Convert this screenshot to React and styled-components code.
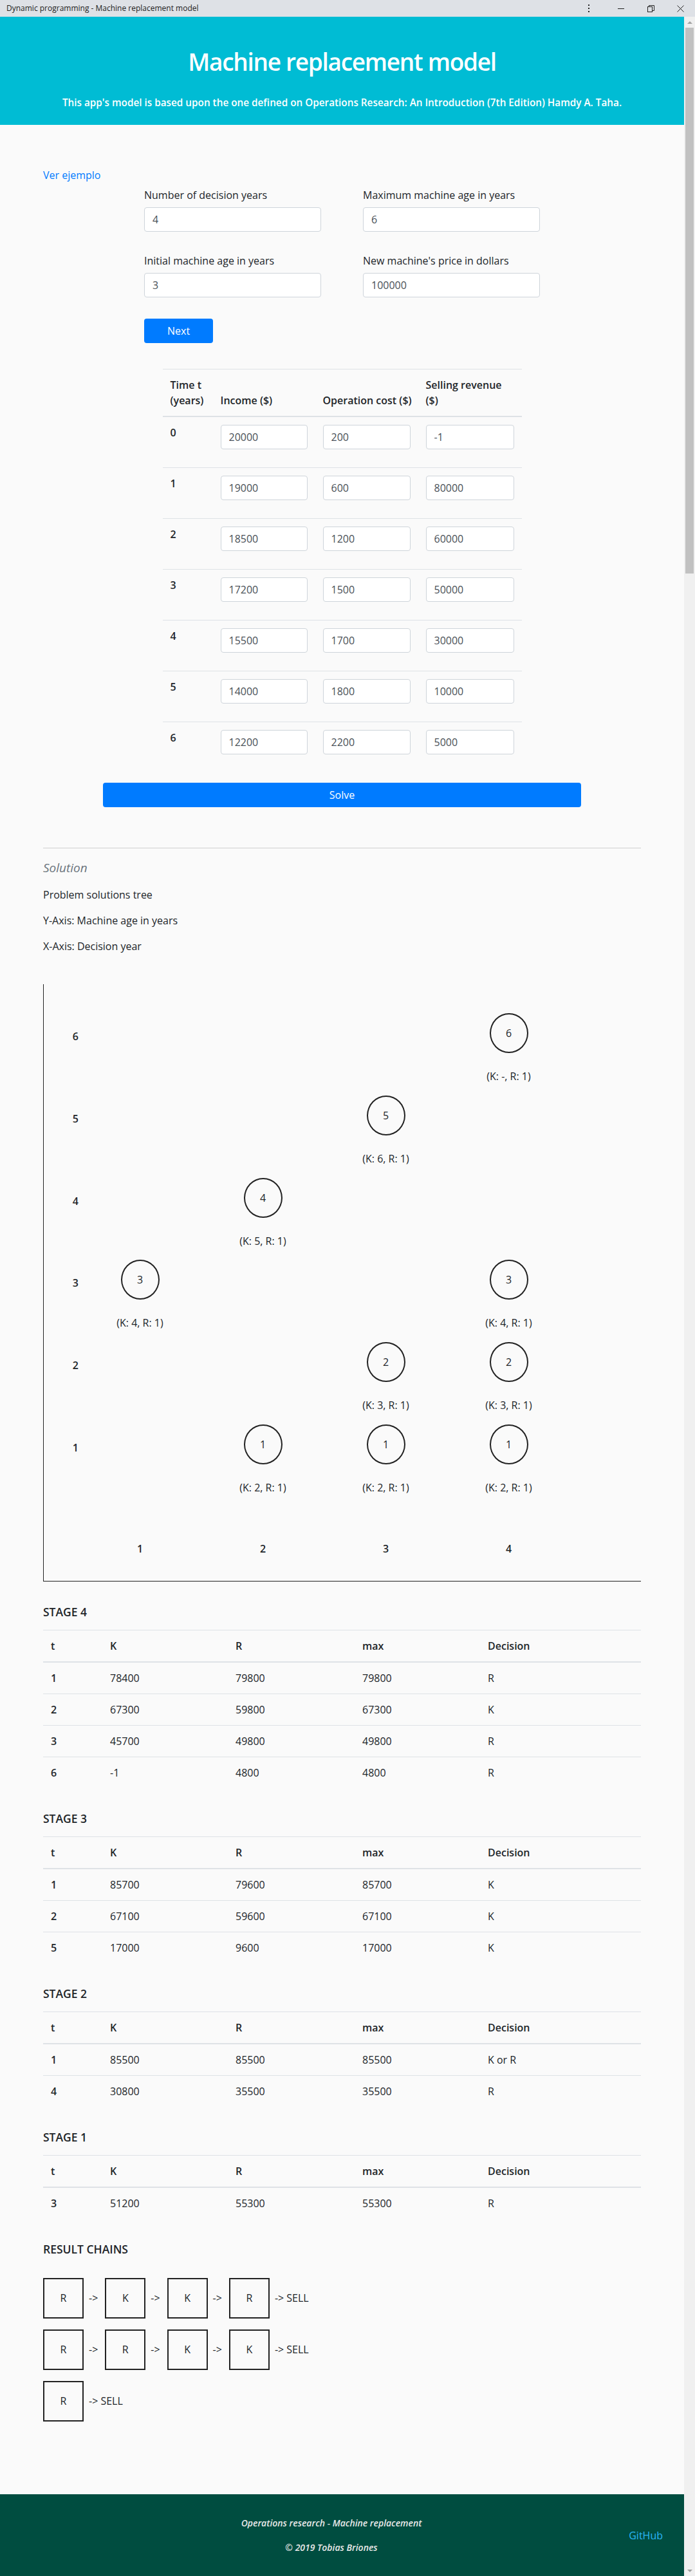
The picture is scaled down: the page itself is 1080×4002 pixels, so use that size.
import React from 'react';
import styled, {createGlobalStyle} from 'styled-components';

const GlobalStyle = createGlobalStyle`
  * {
    box-sizing: border-box;
  }
  html,
  body {
    margin: 0;
    padding: 0;
    height: 100%;
    overflow: hidden;
  }
  body {
    font-family: 'Open Sans', 'Liberation Sans', sans-serif;
    font-size: 16px;
    line-height: 1.5;
    color: #212529;
    background: #fafafa;
  }
`;

const StyledWindow = styled.div`
  height: 100vh;
  display: flex;
  flex-direction: column;
`;

const StyledTitleBar = styled.div`
  height: 26px;
  flex-shrink: 0;
  display: flex;
  align-items: center;
  padding-left: 10px;
  background: #dee1e6;
  font-size: 12px;
  color: #222;
`;

const StyledControls = styled.div`
  margin-left: auto;
  display: flex;
  height: 100%;
`;

const StyledControl = styled.div`
  width: 46px;
  height: 100%;
  display: flex;
  align-items: center;
  justify-content: center;
  margin-right: ${({gap}) => gap || 0}px;
`;

const StyledViewport = styled.div`
  flex: 1;
  min-height: 0;
  display: flex;
`;

const StyledPage = styled.div`
  flex: 1;
  min-width: 0;
  display: flex;
  flex-direction: column;
  overflow: hidden;
`;

const StyledScrollbar = styled.div`
  width: 17px;
  flex-shrink: 0;
  display: flex;
  flex-direction: column;
  background: #f0f0f0;
`;

const StyledScrollArrow = styled.div`
  height: 17px;
  display: flex;
  align-items: center;
  justify-content: center;
  margin-top: ${({down}) => (down ? 'auto' : 0)};
  &::after {
    content: '';
    border-left: 4px solid transparent;
    border-right: 4px solid transparent;
    ${({down}) => (down ? 'border-top: 4px solid #a3a3a3;' : 'border-bottom: 4px solid #a3a3a3;')}
  }
`;

const StyledThumb = styled.div`
  height: 848px;
  margin: 0 2px;
  background: #c1c1c1;
`;

const StyledHeader = styled.header`
  height: 168px;
  flex-shrink: 0;
  background: #00bcd4;
  color: #fff;
  text-align: center;
  padding-top: 47px;
`;

const StyledTitle = styled.h1`
  margin: 0;
  font-size: 37px;
  line-height: 46px;
  font-weight: 600;
  letter-spacing: -1.3px;
`;

const StyledSubtitle = styled.p`
  margin: 28px 0 0;
  font-size: 15.3px;
  line-height: 24px;
  font-weight: 600;
`;

const StyledMain = styled.main`
  padding: 66px 67px 0;
`;

const StyledLink = styled.a`
  color: #007bff;
  text-decoration: none;
  display: inline-block;
`;

const StyledForm = styled.form`
  width: 615px;
  margin: 7px auto 0;
  display: grid;
  grid-template-columns: 275px 275px;
  column-gap: 65px;
  row-gap: 33px;
`;

const StyledLabel = styled.label`
  display: block;
  margin-bottom: 7px;
`;

const StyledInput = styled.input`
  display: block;
  width: 100%;
  height: 38px;
  padding: 6px 12px;
  font-family: inherit;
  font-size: 16px;
  color: #495057;
  background: #fff;
  border: 1px solid #ced4da;
  border-radius: 4px;
  margin-bottom: ${({spaced}) => (spaced ? '16px' : '0')};
`;

const StyledButton = styled.button`
  display: block;
  height: 38px;
  padding: 0 36px;
  font-family: inherit;
  font-size: 16px;
  color: #fff;
  background: #007bff;
  border: none;
  border-radius: 4px;
  width: ${({wide}) => (wide ? '80%' : 'auto')};
  margin: ${({wide}) => (wide ? '0 auto' : '33px 0 0')};
`;

const StyledNextRow = styled.div`
  width: 615px;
  margin: 0 auto;
`;

const StyledTable = styled.table`
  width: ${({narrow}) => (narrow ? '558px' : '100%')};
  margin: ${({narrow}) => (narrow ? '40px auto 16px' : '0 0 35px')};
  border-collapse: collapse;
  table-layout: fixed;
`;

const StyledTh = styled.th`
  padding: 12px;
  text-align: left;
  vertical-align: bottom;
  font-weight: 600;
  white-space: nowrap;
  border-top: 1px solid #dee2e6;
  border-bottom: 2px solid #dee2e6;
`;

const StyledTd = styled.td`
  padding: 12px;
  vertical-align: top;
  border-top: 1px solid #dee2e6;
  font-weight: ${({head}) => (head ? 600 : 400)};
`;

const StyledHr = styled.hr`
  margin: 63px 0 18px;
  border: none;
  border-top: 1px solid #cfcfcf;
`;

const StyledSolution = styled.h5`
  margin: 0 0 18px;
  font-size: 19px;
  line-height: 24px;
  font-style: italic;
  font-weight: 400;
  color: #6c757d;
`;

const StyledText = styled.p`
  margin: 0 0 16px;
`;

const StyledGraph = styled.div`
  margin: 47px 0 35px;
  padding: 45px 0 38px;
  border-left: 1px solid #222;
  border-bottom: 1px solid #222;
  display: grid;
  grid-template-columns: 54px repeat(4, 191px);
  grid-template-rows: repeat(6, 127.8px) 77px;
`;

const StyledAxisLabel = styled.div`
  font-weight: 600;
  line-height: 24px;
  justify-self: ${({x}) => (x ? 'center' : 'end')};
  align-self: ${({x}) => (x ? 'end' : 'start')};
  margin-top: ${({x}) => (x ? 0 : 24)}px;
`;

const StyledNode = styled.div`
  display: flex;
  flex-direction: column;
  align-items: center;
`;

const StyledCircle = styled.div`
  width: 60px;
  height: 62px;
  border: 2px solid #222;
  border-radius: 50%;
  display: flex;
  align-items: center;
  justify-content: center;
`;

const StyledNodeInfo = styled.div`
  margin-top: 24px;
  line-height: 24px;
`;

const StyledHeading = styled.h6`
  margin: 0 0 16px;
  font-size: 17.5px;
  line-height: 24px;
  font-weight: 600;
  text-transform: uppercase;
`;

const StyledChains = styled.div`
  padding-top: 17px;
  display: flex;
  flex-direction: column;
  gap: 17px;
`;

const StyledChain = styled.div`
  display: flex;
  align-items: center;
`;

const StyledChainBox = styled.div`
  width: 63px;
  height: 63px;
  border: 2px solid #222;
  display: flex;
  align-items: center;
  justify-content: center;
`;

const StyledArrow = styled.span`
  padding: 0 11px 0 8px;
`;

const StyledFooter = styled.footer`
  margin-top: auto;
  height: 127px;
  flex-shrink: 0;
  background: #004d40;
  display: grid;
  grid-template-columns: 1fr auto 1fr;
  align-items: center;
  padding-right: 33px;
`;

const StyledFooterText = styled.div`
  grid-column: 2;
  text-align: center;
  font-size: 14px;
  line-height: 21px;
  font-style: italic;
  font-weight: 600;
  color: #e8e8e8;
  & p {
    margin: 0;
  }
  & p + p {
    margin-top: 17px;
  }
`;

const StyledGitHub = styled.a`
  justify-self: end;
  color: #29b6f6;
  text-decoration: none;
  padding-left: 33px;
`;

const inputRows = [
  [20000, 200, -1],
  [19000, 600, 80000],
  [18500, 1200, 60000],
  [17200, 1500, 50000],
  [15500, 1700, 30000],
  [14000, 1800, 10000],
  [12200, 2200, 5000],
];

const graphRows = [
  {age: 6, nodes: {4: '(K: -, R: 1)'}},
  {age: 5, nodes: {3: '(K: 6, R: 1)'}},
  {age: 4, nodes: {2: '(K: 5, R: 1)'}},
  {age: 3, nodes: {1: '(K: 4, R: 1)', 4: '(K: 4, R: 1)'}},
  {age: 2, nodes: {3: '(K: 3, R: 1)', 4: '(K: 3, R: 1)'}},
  {age: 1, nodes: {2: '(K: 2, R: 1)', 3: '(K: 2, R: 1)', 4: '(K: 2, R: 1)'}},
];

const stages = [
  {
    name: 'Stage 4',
    rows: [
      [1, 78400, 79800, 79800, 'R'],
      [2, 67300, 59800, 67300, 'K'],
      [3, 45700, 49800, 49800, 'R'],
      [6, -1, 4800, 4800, 'R'],
    ],
  },
  {
    name: 'Stage 3',
    rows: [
      [1, 85700, 79600, 85700, 'K'],
      [2, 67100, 59600, 67100, 'K'],
      [5, 17000, 9600, 17000, 'K'],
    ],
  },
  {
    name: 'Stage 2',
    rows: [
      [1, 85500, 85500, 85500, 'K or R'],
      [4, 30800, 35500, 35500, 'R'],
    ],
  },
  {
    name: 'Stage 1',
    rows: [[3, 51200, 55300, 55300, 'R']],
  },
];

const chains = [['R', 'K', 'K', 'R'], ['R', 'R', 'K', 'K'], ['R']];

const TitleBar = () => (
  <StyledTitleBar>
    Dynamic programming - Machine replacement model
    <StyledControls>
      <StyledControl gap={4}>
        <svg width="4" height="14" viewBox="0 0 4 14">
          <rect x="1" y="1" width="2" height="2" fill="#222" />
          <rect x="1" y="6" width="2" height="2" fill="#222" />
          <rect x="1" y="11" width="2" height="2" fill="#222" />
        </svg>
      </StyledControl>
      <StyledControl>
        <svg width="10" height="10" viewBox="0 0 10 10">
          <line x1="0" y1="5.5" x2="10" y2="5.5" stroke="#222" />
        </svg>
      </StyledControl>
      <StyledControl>
        <svg width="11" height="11" viewBox="0 0 11 11" fill="none" stroke="#222">
          <rect x="0.5" y="2.5" width="7" height="8" />
          <path d="M2.5 2.5V0.5H10.5V8.5H7.5" />
        </svg>
      </StyledControl>
      <StyledControl>
        <svg width="11" height="11" viewBox="0 0 11 11" stroke="#222">
          <line x1="0.5" y1="0.5" x2="10.5" y2="10.5" />
          <line x1="10.5" y1="0.5" x2="0.5" y2="10.5" />
        </svg>
      </StyledControl>
    </StyledControls>
  </StyledTitleBar>
);

const Field = ({label, value}) => (
  <div>
    <StyledLabel>{label}</StyledLabel>
    <StyledInput defaultValue={value} />
  </div>
);

const StageTable = ({rows}) => (
  <StyledTable>
    <colgroup>
      <col style={{width: 92}} />
      <col style={{width: 195}} />
      <col style={{width: 197}} />
      <col style={{width: 195}} />
      <col />
    </colgroup>
    <thead>
      <tr>
        <StyledTh>t</StyledTh>
        <StyledTh>K</StyledTh>
        <StyledTh>R</StyledTh>
        <StyledTh>max</StyledTh>
        <StyledTh>Decision</StyledTh>
      </tr>
    </thead>
    <tbody>
      {rows.map((row) => (
        <tr key={row[0]}>
          {row.map((cell, i) => (
            <StyledTd key={i} head={i === 0}>
              {cell}
            </StyledTd>
          ))}
        </tr>
      ))}
    </tbody>
  </StyledTable>
);

const SolutionTree = () => (
  <StyledGraph>
    {graphRows.map(({age, nodes}) => (
      <React.Fragment key={age}>
        <StyledAxisLabel>{age}</StyledAxisLabel>
        {[1, 2, 3, 4].map((year) => (
          <StyledNode key={year}>
            {nodes[year] && (
              <>
                <StyledCircle>{age}</StyledCircle>
                <StyledNodeInfo>{nodes[year]}</StyledNodeInfo>
              </>
            )}
          </StyledNode>
        ))}
      </React.Fragment>
    ))}
    <div />
    {[1, 2, 3, 4].map((year) => (
      <StyledAxisLabel key={year} x>
        {year}
      </StyledAxisLabel>
    ))}
  </StyledGraph>
);

const App = () => (
  <StyledWindow>
    <GlobalStyle />
    <TitleBar />
    <StyledViewport>
      <StyledPage>
        <StyledHeader>
          <StyledTitle>Machine replacement model</StyledTitle>
          <StyledSubtitle>
            This app's model is based upon the one defined on Operations Research: An Introduction (7th Edition)
            Hamdy A. Taha.
          </StyledSubtitle>
        </StyledHeader>

        <StyledMain>
          <StyledLink href="#">Ver ejemplo</StyledLink>
          <StyledForm>
            <Field label="Number of decision years" value="4" />
            <Field label="Maximum machine age in years" value="6" />
            <Field label="Initial machine age in years" value="3" />
            <Field label="New machine's price in dollars" value="100000" />
          </StyledForm>
          <StyledNextRow>
            <StyledButton type="button">Next</StyledButton>
          </StyledNextRow>

          <StyledTable narrow>
            <colgroup>
              <col style={{width: 78}} />
              <col style={{width: 159}} />
              <col style={{width: 160}} />
              <col style={{width: 161}} />
            </colgroup>
            <thead>
              <tr>
                <StyledTh>
                  Time t<br />
                  (years)
                </StyledTh>
                <StyledTh>Income ($)</StyledTh>
                <StyledTh>Operation cost ($)</StyledTh>
                <StyledTh>
                  Selling revenue
                  <br />
                  ($)
                </StyledTh>
              </tr>
            </thead>
            <tbody>
              {inputRows.map((row, t) => (
                <tr key={t}>
                  <StyledTd head>{t}</StyledTd>
                  {row.map((value, i) => (
                    <StyledTd key={i}>
                      <StyledInput spaced defaultValue={value} />
                    </StyledTd>
                  ))}
                </tr>
              ))}
            </tbody>
          </StyledTable>
          <StyledButton type="button" wide>
            Solve
          </StyledButton>

          <StyledHr />
          <StyledSolution>Solution</StyledSolution>
          <StyledText>Problem solutions tree</StyledText>
          <StyledText>Y-Axis: Machine age in years</StyledText>
          <StyledText>X-Axis: Decision year</StyledText>
          <SolutionTree />

          {stages.map((stage) => (
            <section key={stage.name}>
              <StyledHeading>{stage.name}</StyledHeading>
              <StageTable rows={stage.rows} />
            </section>
          ))}

          <StyledHeading>Result chains</StyledHeading>
          <StyledChains>
            {chains.map((chain, c) => (
              <StyledChain key={c}>
                {chain.map((step, i) => (
                  <React.Fragment key={i}>
                    <StyledChainBox>{step}</StyledChainBox>
                    <StyledArrow>{i === chain.length - 1 ? '-> SELL' : '->'}</StyledArrow>
                  </React.Fragment>
                ))}
              </StyledChain>
            ))}
          </StyledChains>
        </StyledMain>

        <StyledFooter>
          <StyledFooterText>
            <p>Operations research - Machine replacement</p>
            <p>© 2019 Tobias Briones</p>
          </StyledFooterText>
          <StyledGitHub href="#">GitHub</StyledGitHub>
        </StyledFooter>
      </StyledPage>
      <StyledScrollbar>
        <StyledScrollArrow />
        <StyledThumb />
        <StyledScrollArrow down />
      </StyledScrollbar>
    </StyledViewport>
  </StyledWindow>
);

export default App;
